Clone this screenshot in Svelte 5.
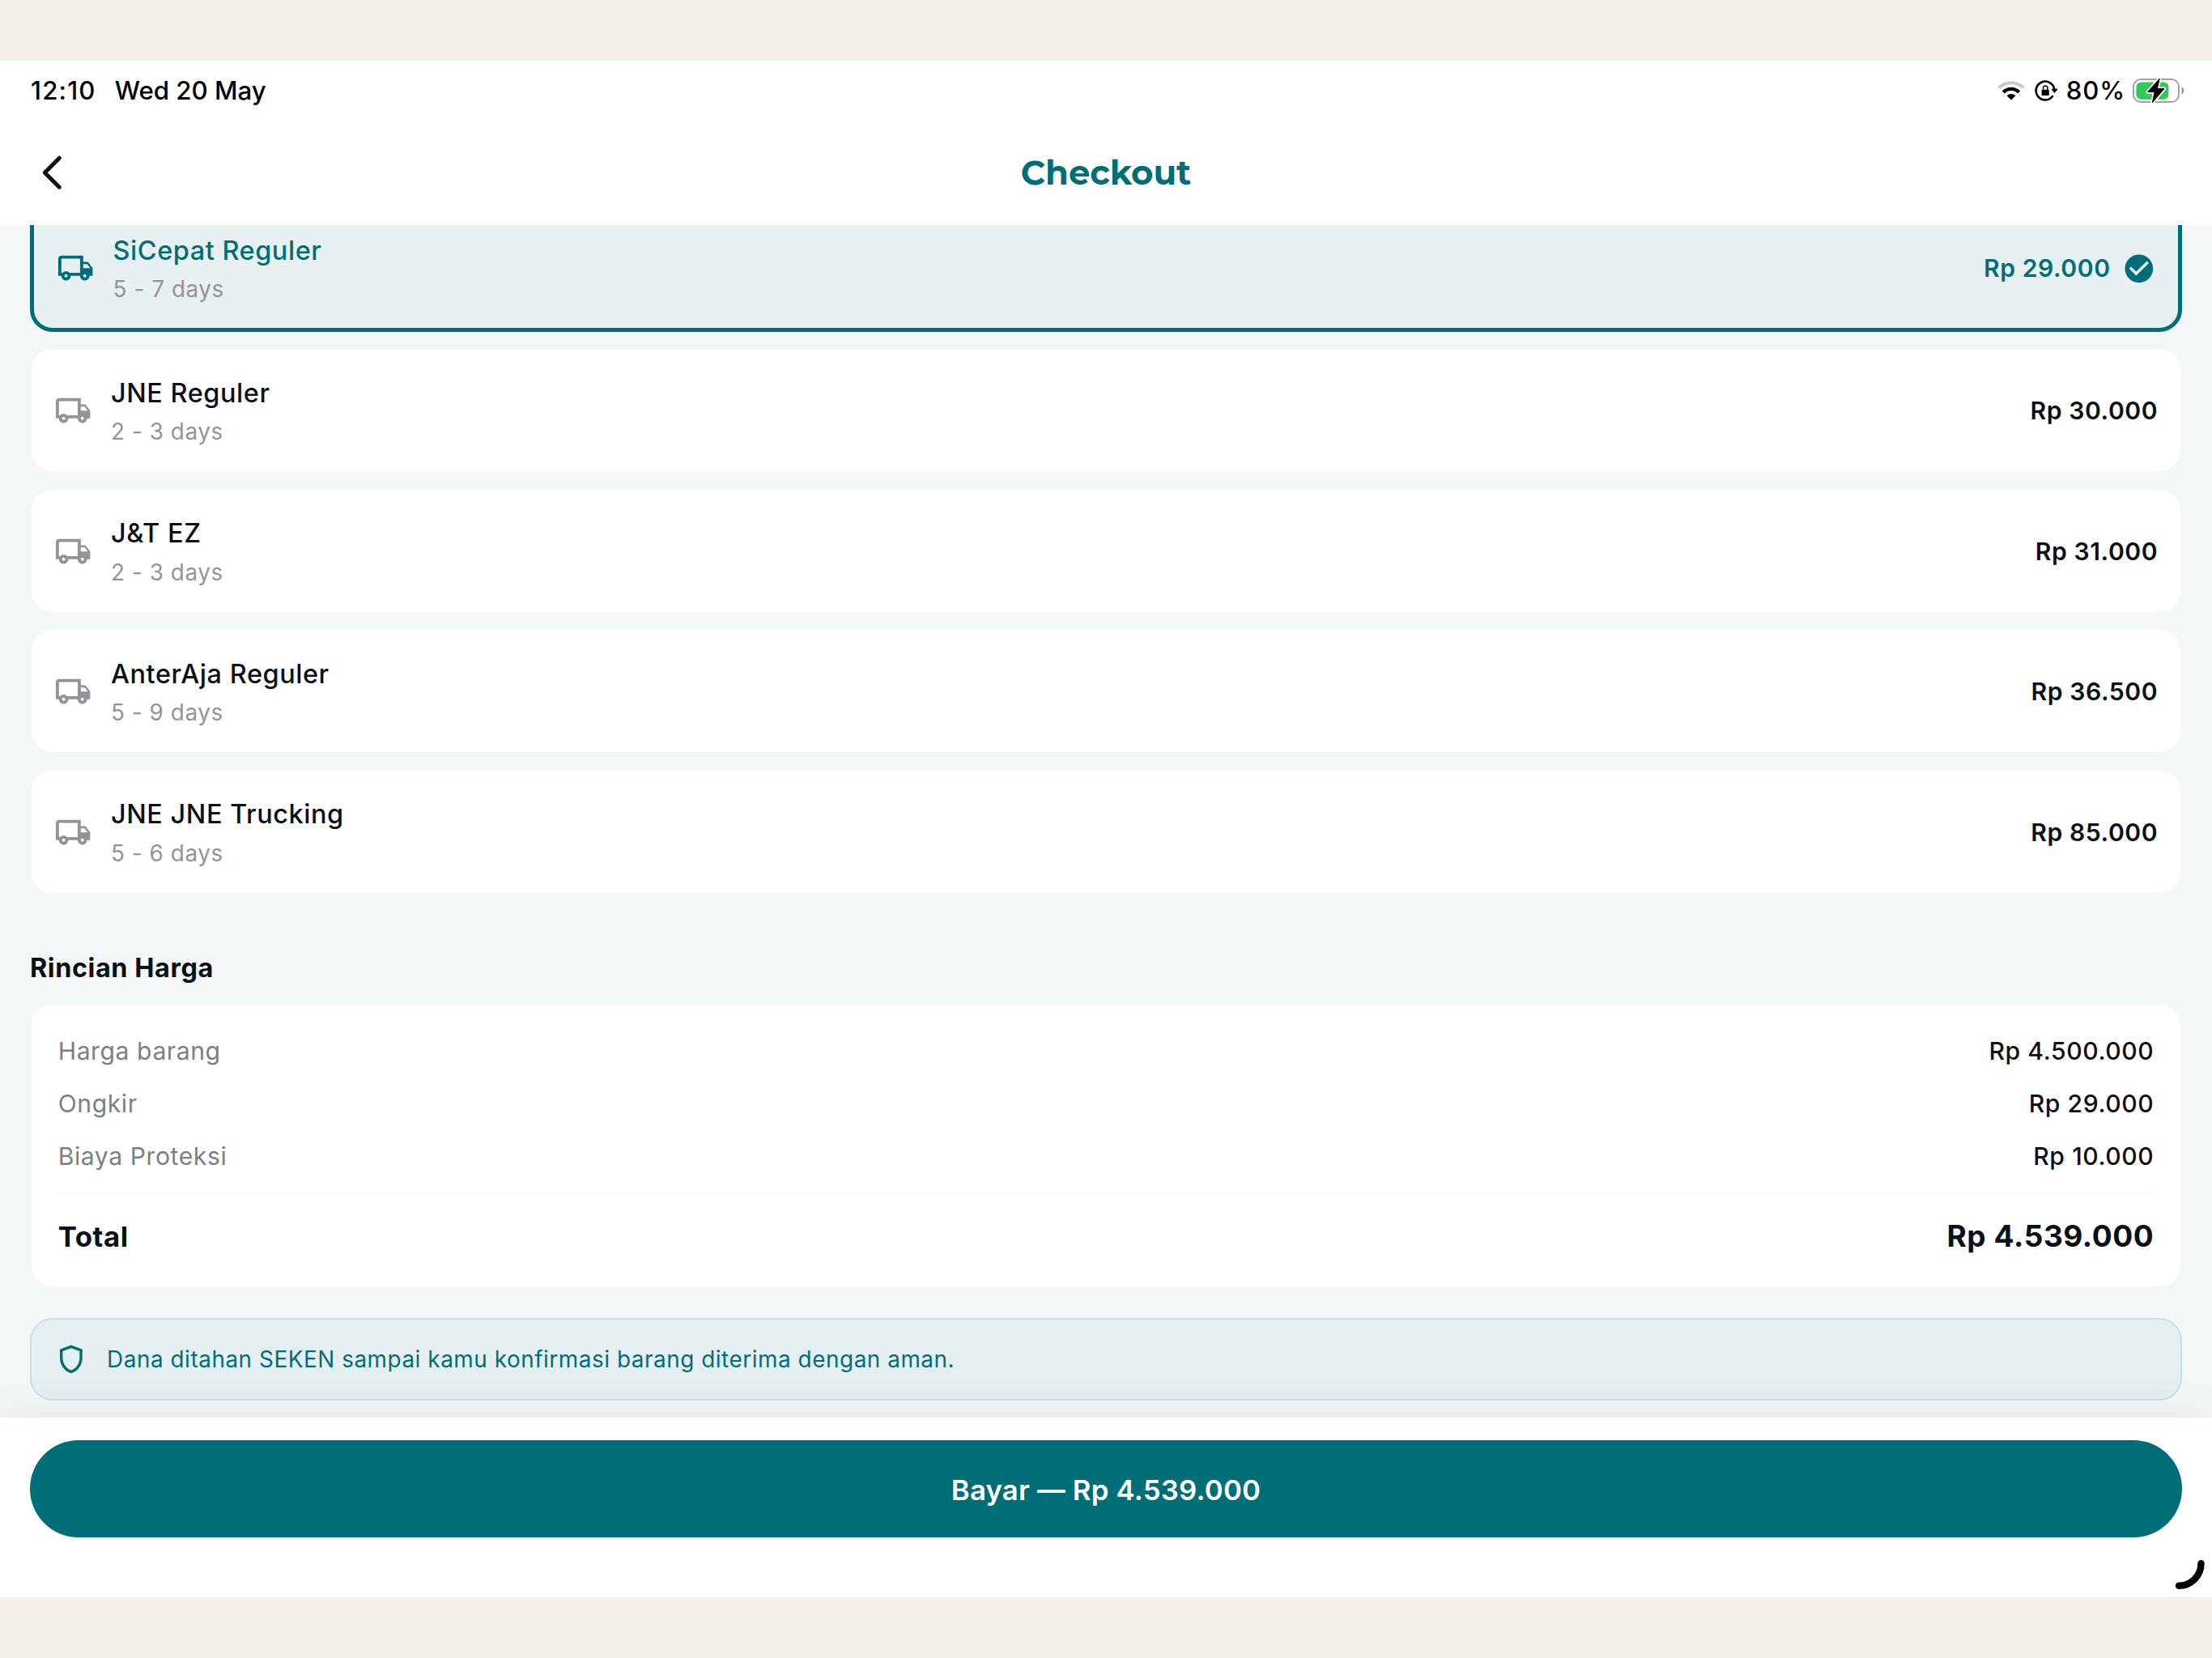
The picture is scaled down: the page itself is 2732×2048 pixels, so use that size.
<script lang="ts">
  type Courier = { name: string; eta: string; price: string }

  const couriers: Courier[] = [
    { name: 'SiCepat Reguler', eta: '5 - 7 days', price: 'Rp 29.000' },
    { name: 'JNE Reguler', eta: '2 - 3 days', price: 'Rp 30.000' },
    { name: 'J&T EZ', eta: '2 - 3 days', price: 'Rp 31.000' },
    { name: 'AnterAja Reguler', eta: '5 - 9 days', price: 'Rp 36.500' },
    { name: 'JNE JNE Trucking', eta: '5 - 6 days', price: 'Rp 85.000' },
  ]

  const costs = [
    { label: 'Harga barang', value: 'Rp 4.500.000' },
    { label: 'Ongkir', value: 'Rp 29.000' },
    { label: 'Biaya Proteksi', value: 'Rp 10.000' },
  ]
  const total = 'Rp 4.539.000'

  let selected = $state(0)
</script>

<div class="screen">
  <div class="status">
    <span class="time">12:10</span>
    <span class="date">Wed 20 May</span>
    <span class="spacer"></span>
    <svg class="wifi" viewBox="0 0 34 24" width="34" height="24">
      <path d="M1.9 8.5A21.3 21.3 0 0 1 32.1 8.5" fill="none" stroke="#c9c9c9" stroke-width="4" />
      <path d="M7.3 13.9A13.7 13.7 0 0 1 26.7 13.9" fill="none" stroke="#000" stroke-width="4.2" />
      <path d="M17 23.6L11.6 18.2A7.6 7.6 0 0 1 22.4 18.2Z" fill="#000" />
    </svg>
    <svg class="lock" viewBox="0 0 30 28" width="30" height="28">
      <path d="M24.3 12.4A11.4 11.4 0 1 0 22 21" fill="none" stroke="#000" stroke-width="2.6" stroke-linecap="round" />
      <path d="M21 12.2H28L24.5 16.4Z" fill="#000" stroke="#000" stroke-width="1" stroke-linejoin="round" />
      <rect x="8.6" y="12.8" width="9.2" height="7.2" rx="1.2" />
      <path d="M10.5 13.4V10.8A2.7 2.9 0 0 1 15.9 10.8V13.4" fill="none" stroke="#000" stroke-width="1.5" />
    </svg>
    <span class="percent">80%</span>
    <svg class="battery" viewBox="0 0 64 34" width="64" height="34">
      <rect x="1" y="3" width="56" height="28" rx="9" fill="none" stroke="#a3a3a3" stroke-width="2" />
      <path d="M60.6 12.2C64 14 64 20 60.6 21.8Z" fill="#8f8f8f" />
      <rect x="4.4" y="6.4" width="40" height="21.4" rx="6" fill="#34c759" />
      <path d="M33.2 2.2L18.6 18.6H27.2L24.4 31.6L39 14.6H30.4Z" fill="#000" stroke="#fff" stroke-width="4.4" stroke-linejoin="round" paint-order="stroke" />
      <path d="M33.2 2.2L18.6 18.6H27.2L24.4 31.6L39 14.6H30.4Z" fill="#000" stroke="#000" stroke-width="1" stroke-linejoin="round" />
    </svg>
  </div>

  <header>
    <button class="back" type="button" aria-label="Back">
      <svg viewBox="0 0 54 54" width="54" height="54"><path d="M36.3 9.2L18.3 27.2L36.3 45.2" fill="none" stroke="currentColor" stroke-width="5" stroke-linecap="round" stroke-linejoin="round" /></svg>
    </button>
    <h1>Checkout</h1>
  </header>

  <main>
    <div class="couriers">
      {#each couriers as courier, i}
        <button class="courier" class:selected={i === selected} type="button" onclick={() => (selected = i)}>
          <svg class="truck" viewBox="0 0 24 24" width="46.3" height="46.3"><path fill="currentColor" d="M20 8h-3V4H3c-1.1 0-2 .9-2 2v11h2c0 1.66 1.34 3 3 3s3-1.34 3-3h6c0 1.66 1.34 3 3 3s3-1.34 3-3h2v-5l-3-4zm-.5 1.5l1.96 2.5H17V9.5h2.5zM6 18c-.55 0-1-.45-1-1s.45-1 1-1 1 .45 1 1-.45 1-1 1zm2.22-3c-.55-.61-1.33-1-2.22-1s-1.67.39-2.22 1H3V6h12v9H8.22zM18 18c-.55 0-1-.45-1-1s.45-1 1-1 1 .45 1 1-.45 1-1 1z" /></svg>
          <span class="info">
            <span class="name">{courier.name}</span>
            <span class="eta">{courier.eta}</span>
          </span>
          <span class="price">{courier.price}</span>
          {#if i === selected}
            <svg class="check" viewBox="0 0 24 24" width="41.7" height="41.7"><path fill="currentColor" d="M12 2C6.48 2 2 6.48 2 12s4.48 10 10 10 10-4.48 10-10S17.52 2 12 2zm-2 15l-5-5 1.41-1.41L10 14.17l7.59-7.59L19 8l-9 9z" /></svg>
          {/if}
        </button>
      {/each}
    </div>

    <h2>Rincian Harga</h2>
    <section class="summary">
      {#each costs as cost}
        <div class="row">
          <span class="label">{cost.label}</span>
          <span class="value">{cost.value}</span>
        </div>
      {/each}
      <hr />
      <div class="row total">
        <span>Total</span>
        <span class="amount">{total}</span>
      </div>
    </section>

    <div class="notice">
      <svg viewBox="0 0 24 24" width="41.7" height="41.7"><path fill="currentColor" d="M12 2L4 5v6.09c0 5.05 3.41 9.76 8 10.91 4.59-1.15 8-5.86 8-10.91V5l-8-3zm6 9.09c0 4-2.55 7.7-6 8.83-3.45-1.13-6-4.82-6-8.83V6.4l6-2.25 6 2.25v4.69z" /></svg>
      <span>Dana ditahan SEKEN sampai kamu konfirmasi barang diterima dengan aman.</span>
    </div>
  </main>

  <footer>
    <button class="pay" type="button">Bayar — {total}</button>
    <svg class="corner" viewBox="0 0 38 38" width="38" height="38"><path d="M32.5 5.3A27.5 27.5 0 0 1 5 32.8" fill="none" stroke="#000" stroke-width="8.4" stroke-linecap="round" /></svg>
  </footer>
</div>

<style>
  :global(body) { background: #f4efe8; }
  .screen {
    --teal: #006e77;
    --ink: #0a1015;
    --muted: #929497;
    box-sizing: border-box;
    width: 2732px;
    height: 2048px;
    padding: 75px 0;
    display: flex;
    flex-direction: column;
    background: #f4efe8;
    color: var(--ink);
    font-family: Inter, 'Liberation Sans', sans-serif;
    letter-spacing: 0.58px;
  }
  button {
    border: 0;
    padding: 0;
    margin: 0;
    font: inherit;
    letter-spacing: inherit;
    color: inherit;
    background: none;
    text-align: left;
  }
  svg { flex: none; display: block; }

  .status {
    height: 74px;
    padding: 0 34px 0 38px;
    display: flex;
    align-items: center;
    background: #fff;
    color: #000;
    font-size: 31.2px;
    font-weight: 500;
    letter-spacing: 0;
  }
  .time { letter-spacing: 1.2px; margin-right: 23px; }
  .spacer { flex: 1; }
  .wifi { margin-right: 12.3px; }
  .lock { margin-right: 8.7px; }
  .percent { letter-spacing: 0.8px; margin-right: 9px; }

  header {
    box-sizing: border-box;
    height: 129.3px;
    padding: 0 37px 2px;
    display: grid;
    grid-template-columns: 1fr auto 1fr;
    align-items: center;
    background: #fff;
  }
  .back { width: 54px; height: 54px; }
  h1 {
    margin: 0;
    color: var(--teal);
    font-family: Montserrat, Inter, sans-serif;
    font-size: 41.7px;
    font-weight: 700;
    line-height: 54px;
    letter-spacing: 0;
  }

  main {
    flex: 1;
    min-height: 0;
    overflow: hidden;
    padding: 0 37px;
    background: #f3f7f8;
  }
  .couriers {
    display: flex;
    flex-direction: column;
    gap: 18.5px;
    margin-top: -27.7px;
  }
  .courier {
    box-sizing: border-box;
    height: 155.1px;
    padding: 2px 27.8px 0 28.2px;
    display: flex;
    align-items: center;
    background: #fff;
    background-clip: padding-box;
    border: 2px solid #f5f7f8;
    border-radius: 27.8px;
  }
  .courier.selected {
    height: 159.8px;
    padding-left: 27.8px;
    background: #e8f0f2;
    border: 5px solid var(--teal);
    color: var(--teal);
  }
  .truck { margin-right: 23.5px; color: var(--muted); }
  .selected .truck { color: var(--teal); }
  .info {
    flex: 1;
    display: flex;
    flex-direction: column;
    gap: 6.4px;
  }
  .name { font-size: 32.4px; font-weight: 500; line-height: 46.3px; }
  .eta { font-size: 27.8px; line-height: 37px; color: var(--muted); }
  .price { font-size: 30.1px; font-weight: 600; line-height: 41px; }
  .check { margin-left: 13.9px; }

  h2 {
    margin: 68.7px 0 19.3px;
    font-size: 32.4px;
    font-weight: 700;
    line-height: 46.3px;
  }
  .summary {
    box-sizing: border-box;
    height: 351.9px;
    padding: 34px 32.7px 0;
    background: #fff;
    background-clip: padding-box;
    border: 2px solid #f5f7f8;
    border-radius: 27.8px;
    display: flex;
    flex-direction: column;
  }
  .row {
    display: flex;
    align-items: baseline;
    justify-content: space-between;
    margin-bottom: 18.5px;
    font-size: 30.1px;
    line-height: 46.3px;
  }
  .label { color: #7d8082; }
  .value { font-weight: 500; }
  hr {
    width: 100%;
    height: 2px;
    margin: 4px 0 24px;
    border: 0;
    background: #f5f7f8;
  }
  .total { margin: 0; font-size: 34.7px; font-weight: 700; line-height: 55px; }
  .amount { font-size: 37px; }

  .notice {
    box-sizing: border-box;
    height: 101.9px;
    margin-top: 37px;
    padding: 0 27.8px;
    display: flex;
    align-items: center;
    gap: 23.6px;
    background: #e5eef0;
    border: 2px solid #cbe0e2;
    border-radius: 27.8px;
    color: var(--teal);
    font-size: 27.8px;
  }

  footer {
    position: relative;
    box-sizing: border-box;
    height: 222px;
    padding: 28px 37px 0;
    background: #fff;
    box-shadow: 0 -9px 46px rgba(0, 0, 0, 0.06);
    clip-path: inset(-80px 0 0 0);
  }
  .pay {
    box-sizing: border-box;
    width: 100%;
    height: 120px;
    padding-top: 1px;
    border-radius: 60px;
    background: var(--teal);
    color: #fff;
    font-size: 34.7px;
    font-weight: 600;
    letter-spacing: 0.23px;
    text-align: center;
  }
  /* corner handle sits over the footer */
  .corner { position: absolute; right: 8.5px; bottom: 9px; }
</style>
